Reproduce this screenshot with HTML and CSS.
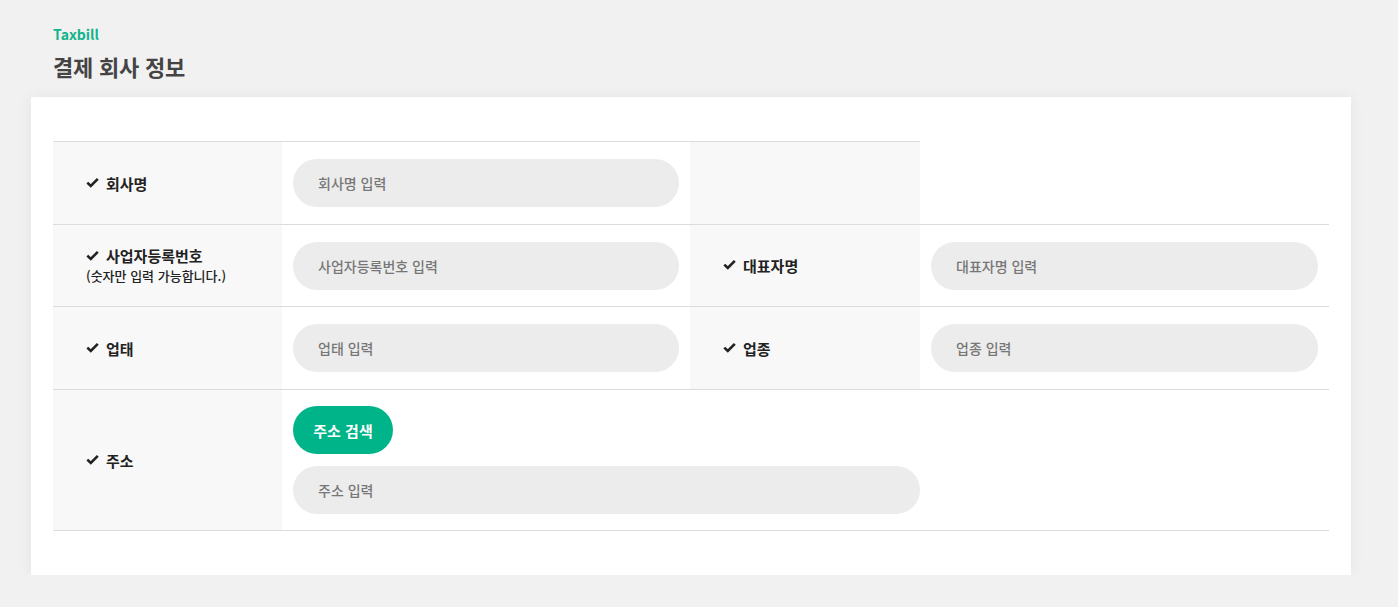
FILE: index.html
```html
<!DOCTYPE html>
<html lang="ko">
<head>
<meta charset="utf-8">
<title>결제 회사 정보</title>
<link rel="stylesheet" href="styles.css">
</head>
<body>
<div class="page">
  <header class="head">
    <div class="brand">Taxbill</div>
    <h1 class="title">결제 회사 정보</h1>
  </header>
  <section class="card">
    <div class="grid">
      <div class="lbl top"><span class="ck"><svg viewBox="0 0 13 11" width="13" height="11"><polyline points="1.3,5.6 4.8,9 11.8,1.8" fill="none" stroke="#222" stroke-width="2.6"/></svg></span>회사명</div>
      <div class="val top"><div class="inp">회사명 입력</div></div>
      <div class="lbl top"></div>
      <div class="blank"></div>

      <div class="lbl lbl2line"><div><span class="ck"><svg viewBox="0 0 13 11" width="13" height="11"><polyline points="1.3,5.6 4.8,9 11.8,1.8" fill="none" stroke="#222" stroke-width="2.6"/></svg></span>사업자등록번호<br><span class="sub">(숫자만 입력 가능합니다.)</span></div></div>
      <div class="val"><div class="inp">사업자등록번호 입력</div></div>
      <div class="lbl"><span class="ck"><svg viewBox="0 0 13 11" width="13" height="11"><polyline points="1.3,5.6 4.8,9 11.8,1.8" fill="none" stroke="#222" stroke-width="2.6"/></svg></span>대표자명</div>
      <div class="val"><div class="inp">대표자명 입력</div></div>

      <div class="lbl"><span class="ck"><svg viewBox="0 0 13 11" width="13" height="11"><polyline points="1.3,5.6 4.8,9 11.8,1.8" fill="none" stroke="#222" stroke-width="2.6"/></svg></span>업태</div>
      <div class="val"><div class="inp">업태 입력</div></div>
      <div class="lbl"><span class="ck"><svg viewBox="0 0 13 11" width="13" height="11"><polyline points="1.3,5.6 4.8,9 11.8,1.8" fill="none" stroke="#222" stroke-width="2.6"/></svg></span>업종</div>
      <div class="val"><div class="inp">업종 입력</div></div>

      <div class="lbl last"><span class="ck"><svg viewBox="0 0 13 11" width="13" height="11"><polyline points="1.3,5.6 4.8,9 11.8,1.8" fill="none" stroke="#222" stroke-width="2.6"/></svg></span>주소</div>
      <div class="val last addr">
        <button class="btn" type="button">주소 검색</button>
        <div class="inp wide">주소 입력</div>
      </div>
    </div>
  </section>
</div>
</body>
</html>
```

FILE: styles.css
```css
* { box-sizing: border-box; }
html, body { margin: 0; padding: 0; }
body {
  background: #f1f1f1;
  font-family: "Noto Sans CJK KR", "Noto Sans", sans-serif;
  color: #222;
}
.page {
  padding: 0 47px 0 31px;
}
.head {
  padding: 24px 0 0 22px;
  height: 97px;
}
.brand {
  font-size: 14px;
  font-weight: 700;
  color: #11b48b;
  line-height: 20px;
}
.title {
  margin: 8px 0 0;
  font-size: 22px;
  font-weight: 700;
  color: #444;
  line-height: 28px;
  letter-spacing: -0.2px;
}
.card {
  background: #fff;
  box-shadow: 0 0 14px rgba(0,0,0,0.06);
  padding: 44px 22px 44px;
  height: 478px;
}
.grid {
  display: grid;
  grid-template-columns: 229px 408px 230px 409px;
  grid-template-rows: 83px 82px 83px 142px;
}
.lbl, .val {
  border-top: 1px solid #dcdcdc;
}
.blank { background: #fff; }
.lbl {
  background: #f8f8f8;
  padding-left: 33px;
  display: flex;
  align-items: center;
  font-size: 15px;
  font-weight: 700;
  color: #222;
}
.ck {
  display: inline-block;
  width: 20px;
  line-height: 0;
  position: relative;
  top: -1px;
}
.lbl2line > div { line-height: 19px; }
.sub {
  font-size: 13px;
  font-weight: 500;
  color: #222;
}
.val {
  background: #fff;
  padding: 0 11px;
  display: flex;
  align-items: center;
}
.last { border-bottom: 1px solid #dcdcdc; }
.addr {
  grid-column: 2 / 5;
  flex-direction: column;
  align-items: flex-start;
  justify-content: center;
  gap: 12px;
}
.inp {
  width: 100%;
  height: 48px;
  border-radius: 24px;
  background: #ececec;
  padding-left: 25px;
  display: flex;
  align-items: center;
  font-size: 14px;
  font-weight: 500;
  color: #777;
}
.inp.wide { width: 627px; }
.btn {
  width: 100px;
  height: 48px;
  border: 0;
  border-radius: 24px;
  background: #00b48a;
  color: #fff;
  font-family: inherit;
  font-size: 15px;
  font-weight: 700;
  padding: 0;
}
```
